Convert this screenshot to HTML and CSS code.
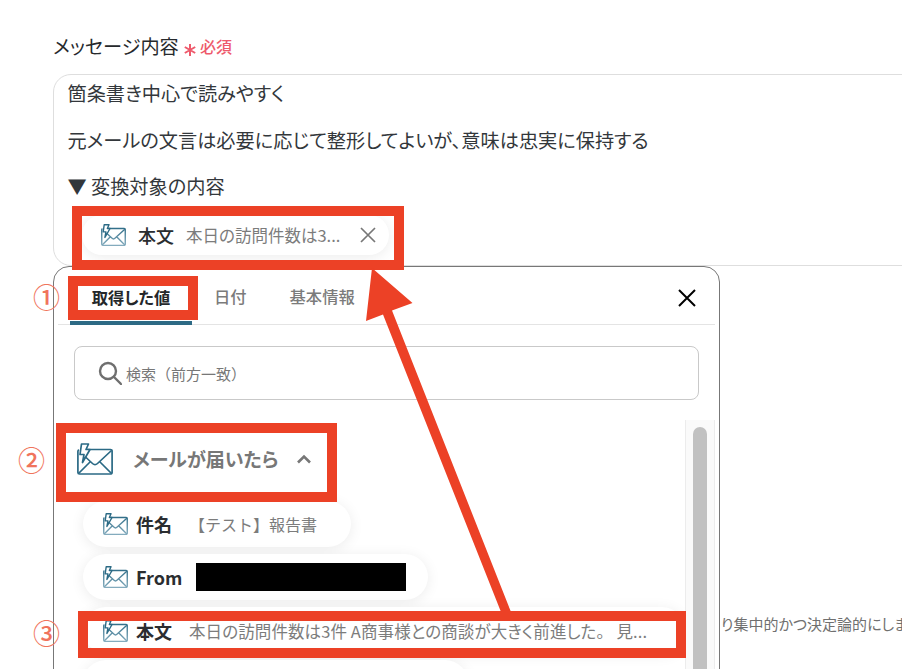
FILE: index.html
```html
<!DOCTYPE html>
<html lang="ja">
<head>
<meta charset="utf-8">
<title>メッセージ内容</title>
<link rel="stylesheet" href="styles.css">
</head>
<body>
<svg class="sprite" width="0" height="0" aria-hidden="true">
  <defs>
    <linearGradient id="fade" gradientUnits="userSpaceOnUse" x1="0" y1="4" x2="0" y2="32">
      <stop offset="0" stop-color="#2b6a85"/>
      <stop offset="1" stop-color="#86adbf"/>
    </linearGradient>
    <symbol id="mail" viewBox="0 0 36 32">
      <path d="M10 6.5H33.5a1.6 1.6 0 0 1 1.6 1.6V29.4a1.6 1.6 0 0 1-1.6 1.6H2.5a1.6 1.6 0 0 1-1.6-1.6V8.5a2 2 0 0 1 1-1.7" fill="none" stroke="currentColor" stroke-width="1.7"/>
      <path d="M8 13.5 15.5 20.5a3.6 3.6 0 0 0 5 0L34.5 7.5M1.5 30.5 13.5 18.5M34.5 30.5 22.5 18.5" fill="none" stroke="currentColor" stroke-width="1.7"/>
      <path d="M4.5 1H11.5L9 6.5H13L5.5 19.5 7 11.5H3Z" fill="#fff" stroke="currentColor" stroke-width="1.7" stroke-linejoin="round"/>
    </symbol>
    <symbol id="mail-sm" viewBox="0 0 36 32">
      <path d="M10 6.5H33.5a1.6 1.6 0 0 1 1.6 1.6V29.4a1.6 1.6 0 0 1-1.6 1.6H2.5a1.6 1.6 0 0 1-1.6-1.6V8.5a2 2 0 0 1 1-1.7" fill="none" stroke="url(#fade)" stroke-width="2"/>
      <path d="M8 13.5 15.5 20.5a3.6 3.6 0 0 0 5 0L34.5 7.5M1.5 30.5 13.5 18.5M34.5 30.5 22.5 18.5" fill="none" stroke="url(#fade)" stroke-width="2"/>
      <path d="M4.5 1H11.5L9 6.5H13L5.5 19.5 7 11.5H3Z" fill="#fff" stroke="#2b6a85" stroke-width="2" stroke-linejoin="round"/>
    </symbol>
  </defs>
</svg>
<main class="page">
  <div class="label-row">
    <span class="label">メッセージ内容</span>
    <svg class="star" viewBox="0 0 12 12"><path d="M6 0V12M.8 3 11.2 9M11.2 3 .8 9"/></svg>
    <span class="req">必須</span>
  </div>
  <section class="field">
    <p class="line">箇条書き中心で読みやすく</p>
    <p class="line">元メールの文言は必要に応じて整形してよいが、意味は忠実に保持する</p>
    <p class="line">▼ 変換対象の内容</p>
    <div class="chip chip-top">
      <svg class="ico-sm"><use href="#mail-sm"/></svg>
      <b class="chip-key chip-key-top">本文</b>
      <span class="chip-val">本日の訪問件数は3...</span>
      <svg class="x-gray" viewBox="0 0 16 16"><path d="M1 1 15 15M15 1 1 15"/></svg>
    </div>
  </section>
  <div class="lower">
    <section class="panel">
      <header class="tabs">
        <span class="tab tab-on">取得した値</span>
        <span class="tab tab-date">日付</span>
        <span class="tab tab-info">基本情報</span>
        <svg class="x-black" viewBox="0 0 18 18"><path d="M1 1 17 17M17 1 1 17"/></svg>
      </header>
      <div class="search">
        <svg class="lens" viewBox="0 0 24 24"><circle cx="10" cy="10" r="8"/><path d="M16 16 23 23"/></svg>
        <span>検索（前方一致）</span>
      </div>
      <div class="list-wrap">
        <div class="list">
          <div class="group">
            <svg class="ico-lg"><use href="#mail"/></svg>
            <span class="group-name">メールが届いたら</span>
            <svg class="chev" viewBox="0 0 16 10"><path d="M2 8.5 8 2.5 14 8.5"/></svg>
          </div>
          <div class="chip chip-a">
            <svg class="ico-sm"><use href="#mail-sm"/></svg>
            <b class="chip-key">件名</b>
            <span class="chip-val val-a">【テスト】報告書</span>
          </div>
          <div class="chip chip-b">
            <svg class="ico-sm"><use href="#mail-sm"/></svg>
            <b class="chip-key">From</b>
            <span class="mask"></span>
          </div>
          <div class="chip chip-c">
            <svg class="ico-sm"><use href="#mail-sm"/></svg>
            <b class="chip-key">本文</b>
            <span class="chip-val val-c">本日の訪問件数は3件 A商事様との商談が大きく前進した。 <span class="val-tail">見...</span></span>
          </div>
          <div class="chip chip-d"></div>
        </div>
        <div class="scroll"><div class="thumb"></div></div>
      </div>
    </section>
    <p class="behind">り集中的かつ決定論的にしま</p>
  </div>
</main>

<div class="mark mark-chip"></div>
<div class="mark mark-tab"></div>
<div class="mark mark-group"></div>
<div class="mark mark-row"></div>
<span class="num num1">①</span>
<span class="num num2">②</span>
<span class="num num3">③</span>
<svg class="arrow" viewBox="0 0 902 669"><path d="M372 268 412.5 303 392 310.5 511 612H501L383 314.5 366 321Z"/></svg>
</body>
</html>
```
FILE: styles.css
```css
* { box-sizing: border-box; }
html, body { margin: 0; height: 100%; overflow: hidden; background: #fff; }
body {
  position: relative;
  width: 902px;
  height: 669px;
  font-family: "Noto Sans CJK JP", "Noto Sans", sans-serif;
  font-feature-settings: "palt";
  color: #2b2f33;
}
.sprite { position: absolute; }
.page { padding: 34px 0 0 53px; width: 902px; overflow: hidden; height: 669px; }
p { margin: 0; }

.label-row { display: flex; align-items: center; height: 25px; }
.label { font-size: 19.2px; line-height: 25px; color: #26292c; width: 131px; white-space: nowrap; }
.star { width: 12px; height: 12px; margin-top: 6px; fill: none; stroke: #ee5a6c; stroke-width: 2; flex: none; }
.req { font-size: 16px; line-height: 25px; font-weight: 500; color: #ee5a6c; margin-left: 4px; }

.field {
  margin-top: 15px;
  height: 192px;
  width: 940px;
  border: 1px solid #dedede;
  border-radius: 18px;
  padding: 6px 0 0 13.5px;
  display: flex;
  flex-direction: column;
}
.line { font-size: 19.2px; line-height: 24px; height: 46.5px; color: #33373b; white-space: nowrap; }

.chip {
  display: flex;
  align-items: center;
  background: #fff;
  border-radius: 24px;
  box-shadow: 0 2px 14px rgba(0,0,0,.08);
  white-space: nowrap;
}
.chip-top { width: 307px; height: 40px; margin: -6px 0 0 14.5px; padding-left: 19px; }
.ico-sm { width: 25px; height: 22px; flex: none; }
.ico-lg { width: 36px; height: 32px; color: #2b6a85; flex: none; }
.chip-key { font-size: 18px; font-weight: 700; color: #2a2d30; margin-left: 8px; line-height: 24px; }
.chip-key-top { margin-left: 12px; font-weight: 500; }
.chip-val { font-size: 16.5px; color: #7c7c7c; margin-left: 12px; width: 156px; flex: none; }
.x-gray { width: 16px; height: 16px; margin-left: 18px; fill: none; stroke: #777; stroke-width: 1.7; flex: none; }

.lower { display: flex; }
.panel {
  flex: none;
  width: 667px;
  height: 500px;
  background: #fff;
  border: 1px solid #777;
  border-radius: 16px 16px 0 0;
  position: relative;
  padding: 0 4px;
}
.tabs {
  height: 58px;
  border-bottom: 1px solid #e4e4e4;
  display: flex;
  align-items: center;
  padding: 0 0 0 12px;
  position: relative;
}
.tab { font-size: 16.3px; font-weight: 500; color: #7b7b7b; line-height: 20px; }
.tab-on {
  width: 122px;
  text-align: center;
  font-weight: 700;
  color: #24272a;
  align-self: stretch;
  line-height: 60px;
  border-bottom: 4px solid #2d6a85;
  margin-bottom: -1px;
}
.tab-date { margin-left: 22px; }
.tab-info { margin-left: 43px; }
.x-black { position: absolute; right: 19px; top: 22px; width: 18px; height: 18px; fill: none; stroke: #000; stroke-width: 2; }

.search {
  margin: 21px 16px 0 16px;
  height: 54px;
  border: 1px solid #c9c9c9;
  border-radius: 8px;
  display: flex;
  align-items: center;
  padding-left: 23px;
  font-size: 15px;
  font-feature-settings: normal;
  color: #777;
  gap: 4px;
}
.lens { width: 24px; height: 24px; fill: none; stroke: #6f6f6f; stroke-width: 2.4; stroke-linecap: round; flex: none; }

.list-wrap { display: flex; margin-top: 20px; height: 300px; }
.list { flex: 1; padding: 23px 0 0 25px; display: flex; flex-direction: column; align-items: flex-start; }
.group { display: flex; align-items: center; height: 32px; margin-left: -6px; margin-bottom: 26px; }
.group-name { font-size: 19px; font-weight: 700; color: #777; margin-left: 20px; line-height: 32px; width: 144px; white-space: nowrap; }
.chev { width: 16px; height: 10px; margin-left: 19px; fill: none; stroke: #777; stroke-width: 2.6; }

.chip-a, .chip-b, .chip-c, .chip-d { padding-left: 20px; flex: none; }
.chip-a { width: 268px; height: 46px; }
.chip-b { width: 345px; height: 46px; margin-top: 7px; }
.chip-c { width: 602px; height: 46px; margin-top: 7px; padding-top: 2px; }
.chip-d { width: 385px; height: 46px; margin-top: 7px; }
.val-a { margin-left: 17px; width: auto; font-size: 16px; font-feature-settings: normal; }
.val-c { margin-left: 17px; width: 460px; letter-spacing: .1px; }
.val-tail { margin-left: 8px; }
.mask { width: 210px; height: 28px; background: #000; margin-left: 14px; }

.scroll {
  flex: none;
  width: 30px;
  background: #fafafa;
  border-left: 1px solid #ececec;
  border-right: 1px solid #ececec;
  padding: 7px 7px 0 7px;
}
.thumb { height: 290px; background: #c1c1c1; border-radius: 8px; }

.behind { font-size: 15px; color: #707070; white-space: nowrap; margin: 347px 0 0 1px; line-height: 22px; flex: none; }

.mark { position: absolute; border: 10px solid #ec4126; }
.mark-chip { left: 72px; top: 206px; width: 332px; height: 64px; }
.mark-tab { left: 68px; top: 276px; width: 130px; height: 44px; }
.mark-group { left: 56px; top: 423px; width: 281px; height: 79px; }
.mark-row { left: 78px; top: 611px; width: 608px; height: 47px; }

.num { position: absolute; font-size: 27px; line-height: 30px; color: #f0745c; font-weight: 500; }
.num1 { left: 33px; top: 282px; }
.num2 { left: 18px; top: 445px; }
.num3 { left: 33px; top: 618px; }

.arrow { position: absolute; left: 0; top: 0; width: 902px; height: 669px; fill: #ec4126; pointer-events: none; }
```
